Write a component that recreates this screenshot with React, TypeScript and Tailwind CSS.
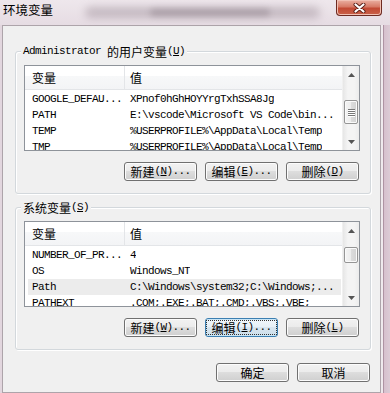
import React from 'react';

// Latin text in the dialog is a 6px-per-char monospace, CJK is 12px
const MONO = "font-['Liberation_Mono','Noto_Sans_CJK_SC',monospace] text-[11px] tracking-[-0.6px]";
const CJK = "font-['Noto_Sans_CJK_SC',sans-serif] text-[12px] tracking-normal";

type VarRow = { name: string; value: string; selected?: boolean };

const userVars: VarRow[] = [
  { name: 'GOOGLE_DEFAU...', value: 'XPnof0hGhHOYYrgTxhSSA8Jg' },
  { name: 'PATH', value: 'E:\\vscode\\Microsoft VS Code\\bin...' },
  { name: 'TEMP', value: '%USERPROFILE%\\AppData\\Local\\Temp' },
  { name: 'TMP', value: '%USERPROFILE%\\AppData\\Local\\Temp' },
];

const systemVars: VarRow[] = [
  { name: 'NUMBER_OF_PR...', value: '4' },
  { name: 'OS', value: 'Windows_NT' },
  { name: 'Path', value: 'C:\\Windows\\system32;C:\\Windows;...', selected: true },
  { name: 'PATHEXT', value: '.COM;.EXE;.BAT;.CMD;.VBS;.VBE;' },
];

const Cjk: React.FC<{ children: React.ReactNode }> = ({ children }) => (
  <span className={CJK}>{children}</span>
);

const Hotkey: React.FC<{ k: string; dots?: boolean }> = ({ k, dots }) => (
  <span className={MONO}>
    (<span className="underline underline-offset-[1px]">{k}</span>){dots ? '...' : ''}
  </span>
);

const WinButton: React.FC<{ label: string; k?: string; dots?: boolean; focused?: boolean }> = ({
  label,
  k,
  dots,
  focused,
}) => (
  <div
    className={`w-[73px] h-[19px] rounded-[3px] border flex items-center justify-center leading-none text-black ${
      focused
        ? 'border-[#3c7fb1] bg-[linear-gradient(#f1f7fb_0%,#e6eff6_50%,#d8e5ef_50%,#cddfeb_100%)] shadow-[inset_0_0_0_1px_#c9e6f7]'
        : 'border-[#707070] bg-[linear-gradient(#f2f2f2_0%,#ebebeb_50%,#dddddd_50%,#cfcfcf_100%)] shadow-[inset_0_0_0_1px_#fcfcfc]'
    }`}
  >
    <span
      className={`flex items-center justify-center h-[13px] ${
        focused ? 'w-[69px] outline outline-1 outline-dotted outline-[#333]' : ''
      }`}
    >
      <Cjk>{label}</Cjk>
      {k && <Hotkey k={k} dots={dots} />}
    </span>
  </div>
);

const Arrow: React.FC<{ up?: boolean }> = ({ up }) => (
  <div className="h-[17px] shrink-0 flex items-center justify-center">
    <svg width="7" height="4" viewBox="0 0 7 4">
      <path d={up ? 'M0 4L3.5 0L7 4Z' : 'M0 0L3.5 4L7 0Z'} fill="#555" />
    </svg>
  </div>
);

const ScrollBar: React.FC<{ thumb: string; grip?: boolean }> = ({ thumb, grip }) => (
  <div className="w-[17px] shrink-0 flex flex-col bg-[linear-gradient(90deg,#e6e6e6,#f4f4f4_30%,#f4f4f4_70%,#ececec)] border-l border-[#f0f0f0]">
    <Arrow up />
    <div className="flex-1">
      <div
        className={`${thumb} mx-[1px] rounded-[2px] border border-[#959595] bg-[linear-gradient(90deg,#f4f4f4,#ececec_50%,#dcdcdc_50%,#d2d2d2)] shadow-[inset_0_0_0_1px_#fafafa] flex flex-col items-center justify-center gap-[1px]`}
      >
        {grip &&
          [0, 1, 2, 3].map((i) => (
            <div key={i} className="w-[7px] h-[1px] bg-[#777] shadow-[0_1px_0_#fff]" />
          ))}
      </div>
    </div>
    <Arrow />
  </div>
);

const ListBox: React.FC<{ rows: VarRow[]; thumb: string; grip?: boolean }> = ({ rows, thumb, grip }) => (
  <div className="h-[86px] w-[336px] border border-[#8e939a] bg-white flex overflow-hidden">
    <div className="flex-1 min-w-0 flex flex-col overflow-hidden">
      <div className="h-[24px] shrink-0 flex bg-[linear-gradient(#ffffff_0%,#ffffff_45%,#f7f8f9_45%,#f3f4f6_100%)] border-b border-[#e3e5e8]">
        <div className="w-[100px] border-r border-[#e3e5e8] pl-[7px] flex items-center">
          <Cjk>变量</Cjk>
        </div>
        <div className="pl-[5px] flex items-center">
          <Cjk>值</Cjk>
        </div>
      </div>
      <div className="pt-[1px] flex flex-col">
        {rows.map((r) => (
          <div
            key={r.name}
            className={`h-[16px] shrink-0 ml-[3px] mr-[1px] flex items-center whitespace-nowrap text-black leading-[16px] ${
              r.selected ? 'bg-[#ececec]' : ''
            }`}
          >
            <div className={`w-[97px] shrink-0 pl-[4px] overflow-hidden ${MONO}`}>{r.name}</div>
            <div className={`pl-[5px] overflow-hidden ${MONO}`}>{r.value}</div>
          </div>
        ))}
      </div>
    </div>
    <ScrollBar thumb={thumb} grip={grip} />
  </div>
);

const GroupBox: React.FC<{ title: React.ReactNode; className?: string; children: React.ReactNode }> = ({
  title,
  className,
  children,
}) => (
  <div
    className={`relative w-[356px] border border-[#d3d8dc] rounded-[3px] shadow-[inset_1px_1px_0_#ffffff,1px_1px_0_#ffffff] pt-[13px] pl-[8px] pr-[10px] pb-[12px] ${
      className ?? ''
    }`}
  >
    <div className="absolute left-[5px] -top-[8px] h-[15px] px-[2px] bg-[#f0f0f0] flex items-center leading-none text-black whitespace-pre">
      {title}
    </div>
    {children}
  </div>
);

export default function App() {
  return (
    <div className="w-[390px] h-[393px] overflow-hidden flex flex-col bg-[#e9e0e6] select-none">
      {/* glass title bar */}
      <div className="relative h-[25px] shrink-0 flex items-start bg-[linear-gradient(#eee7ec,#e6dce3)]">
        <div className="absolute left-[85px] top-[7px] w-[235px] h-[11px] rounded-full bg-[#7d6c78] opacity-35 blur-[4px]" />
        <div className="absolute left-[150px] top-[9px] w-[120px] h-[7px] rounded-full bg-[#5f505a] opacity-30 blur-[3px]" />
        <span className="relative pl-[3px] pt-[1px] leading-[18px] font-['Noto_Sans_CJK_SC',sans-serif] text-[12.5px] text-black">
          环境变量
        </span>
        <div className="relative ml-auto mr-[8px] w-[46px] h-[16px] rounded-b-[4px] border border-t-0 border-[#6d2a22] bg-[linear-gradient(#eab0a2_0%,#d77a66_45%,#c24a34_55%,#c9614a_100%)] shadow-[inset_0_0_0_1px_#f1c0b3] flex items-center justify-center">
          <svg width="13" height="10" viewBox="0 0 13 10">
            <path d="M2.5 1.5L10.5 8.5M10.5 1.5L2.5 8.5" stroke="#5a1d14" strokeWidth="4" strokeLinecap="round" />
            <path d="M2.5 1.5L10.5 8.5M10.5 1.5L2.5 8.5" stroke="#ffffff" strokeWidth="2.2" strokeLinecap="round" />
          </svg>
        </div>
      </div>

      <div className="flex flex-1 min-h-0">
        <div className="w-[2px] shrink-0 bg-[#e2d6de]" />

        {/* client area */}
        <div className="w-[379px] shrink-0 border border-[#ada4aa] bg-[#f0f0f0] pl-[12px] pr-[10px] flex flex-col">
          <GroupBox
            className="mt-[25px]"
            title={
              <>
                <span className={MONO}>{'Administrator\u00a0'}</span>
                <Cjk>的用户变量</Cjk>
                <Hotkey k="U" />
              </>
            }
          >
            <ListBox rows={userVars} thumb="mt-[17px] h-[24px]" grip />
            <div className="mt-[11px] mr-[1px] flex justify-end gap-[8px]">
              <WinButton label="新建" k="N" dots />
              <WinButton label="编辑" k="E" dots />
              <WinButton label="删除" k="D" />
            </div>
          </GroupBox>

          <GroupBox
            className="mt-[13px]"
            title={
              <>
                <Cjk>系统变量</Cjk>
                <Hotkey k="S" />
              </>
            }
          >
            <ListBox rows={systemVars} thumb="mt-[8px] h-[16px]" />
            <div className="mt-[11px] mr-[1px] flex justify-end gap-[8px]">
              <WinButton label="新建" k="W" dots />
              <WinButton label="编辑" k="I" dots focused />
              <WinButton label="删除" k="L" />
            </div>
          </GroupBox>

          <div className="mt-[13px] flex justify-end gap-[8px]">
            <WinButton label="确定" />
            <WinButton label="取消" />
          </div>
        </div>

        {/* right frame */}
        <div className="w-[2px] shrink-0 bg-[#efe9ed]" />
        <div className="w-[1px] shrink-0 bg-[#ae93a3]" />
        <div className="flex-1 bg-[linear-gradient(90deg,#d6c0cd,#dccbd5)]" />
      </div>
    </div>
  );
}
